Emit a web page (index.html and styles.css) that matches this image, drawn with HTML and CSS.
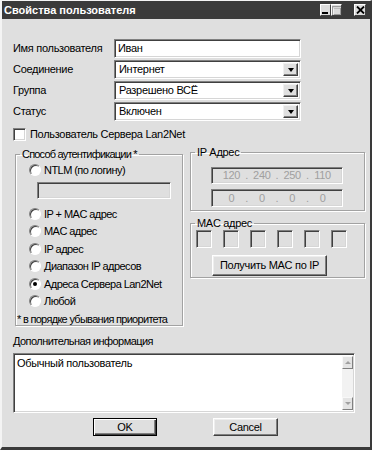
FILE: index.html
```html
<!DOCTYPE html>
<html lang="ru">
<head>
<meta charset="utf-8">
<title>Свойства пользователя</title>
<link rel="stylesheet" href="styles.css">
</head>
<body>
<div class="window">
  <div class="titlebar">
    <span class="title">Свойства пользователя</span>
    <div class="tb-buttons">
      <span class="tb-btn"><svg width="9" height="9" viewBox="0 0 9 9"><rect x="1" y="6" width="6" height="2" fill="#000"/></svg></span>
      <span class="tb-btn"><svg width="9" height="9" viewBox="0 0 9 9"><rect x="0.5" y="0.5" width="8" height="8" fill="none" stroke="#9a9a9a"/><rect x="0.5" y="0.5" width="8" height="2" fill="#9a9a9a"/><rect x="1.5" y="1.5" width="8" height="8" fill="none" stroke="#fff" opacity="0.6"/></svg></span>
      <span class="tb-btn close"><svg width="9" height="8" viewBox="0 0 9 8"><path d="M1 0.5 L8 7.5 M8 0.5 L1 7.5" stroke="#000" stroke-width="1.8"/></svg></span>
    </div>
  </div>
  <div class="content">
    <div class="form">
      <span class="lbl">Имя пользователя</span>
      <div class="field sunken">Иван</div>
      <span class="lbl">Соединение</span>
      <div class="select sunken"><span class="sel-text">Интернет</span><span class="drop"><i class="arrow"></i></span></div>
      <span class="lbl">Группа</span>
      <div class="select sunken"><span class="sel-text">Разрешено ВСЁ</span><span class="drop"><i class="arrow"></i></span></div>
      <span class="lbl">Статус</span>
      <div class="select sunken"><span class="sel-text">Включен</span><span class="drop"><i class="arrow"></i></span></div>
    </div>
    <div class="check-row"><span class="checkbox sunken"></span><span>Пользователь Сервера Lan2Net</span></div>
    <div class="columns">
      <fieldset class="group auth">
        <legend>Способ аутентификации *</legend>
        <div class="radio-row"><span class="radio"></span>NTLM (по логину)</div>
        <div class="login sunken disabled"></div>
        <div class="radio-row first"><span class="radio"></span>IP + MAC адрес</div>
        <div class="radio-row"><span class="radio"></span>MAC адрес</div>
        <div class="radio-row"><span class="radio"></span>IP адрес</div>
        <div class="radio-row"><span class="radio"></span>Диапазон IP адресов</div>
        <div class="radio-row"><span class="radio checked"></span>Адреса Сервера Lan2Net</div>
        <div class="radio-row"><span class="radio"></span>Любой</div>
        <div class="note">* в порядке убывания приоритета</div>
      </fieldset>
      <div class="right-col">
        <fieldset class="group ip">
          <legend>IP Адрес</legend>
          <div class="ipfield sunken disabled"><span>120</span><b>.</b><span>240</span><b>.</b><span>250</span><b>.</b><span>110</span></div>
          <div class="ipfield sunken disabled second"><span>0</span><b>.</b><span>0</span><b>.</b><span>0</span><b>.</b><span>0</span></div>
        </fieldset>
        <fieldset class="group mac">
          <legend>MAC адрес</legend>
          <div class="mac-boxes">
            <span class="macbox sunken disabled"></span>
            <span class="macbox sunken disabled"></span>
            <span class="macbox sunken disabled"></span>
            <span class="macbox sunken disabled"></span>
            <span class="macbox sunken disabled"></span>
            <span class="macbox sunken disabled"></span>
          </div>
          <button class="btn getmac">Получить MAC по IP</button>
        </fieldset>
      </div>
    </div>
    <div class="info-label">Дополнительная информация</div>
    <div class="memo sunken">
      <div class="memo-text">Обычный пользователь</div>
      <div class="scrollbar">
        <span class="sb-btn"><i class="up"></i></span>
        <span class="sb-track"></span>
        <span class="sb-btn"><i class="down"></i></span>
      </div>
    </div>
    <div class="buttons">
      <button class="btn default">OK</button>
      <button class="btn cancel">Cancel</button>
    </div>
  </div>
</div>
</body>
</html>
```

FILE: styles.css
```css
* { box-sizing: border-box; }
html, body { margin: 0; padding: 0; background: #dfdfdf; }
body {
  font-family: "Liberation Sans", Arial, sans-serif;
  font-size: 11px;
  letter-spacing: -0.3px;
  color: #000;
}
.window {
  width: 372px;
  height: 450px;
  background: #dfdfdf;
  border-left: 2px solid #f4f4f4;
  border-top: 1px solid #f4f4f4;
  border-right: 2px solid #3a3a3a;
  border-bottom: 3px solid #3a3a3a;
  display: flex;
  flex-direction: column;
}
.titlebar {
  height: 18px;
  background: #3b3b3b;
  display: flex;
  align-items: center;
  justify-content: space-between;
  padding: 0 4px 0 2px;
}
.title {
  color: #fff;
  font-weight: bold;
  font-size: 11px;
  font-family: "Liberation Sans", Arial, sans-serif;
  letter-spacing: 0;
}
.tb-buttons { display: flex; gap: 0; }
.tb-btn {
  width: 11px;
  height: 12px;
  background: #dcdcdc;
  border: 1px solid;
  border-color: #fff #404040 #404040 #fff;
  display: flex;
  align-items: center;
  justify-content: center;
  overflow: hidden;
}
.tb-btn svg { display: block; }
.tb-btn.close { margin-left: 12px; width: 12px; }
.content {
  padding: 20px 0 0 11px;
  display: flex;
  flex-direction: column;
}
.sunken {
  border: 1px solid;
  border-color: #808080 #fff #fff #808080;
  box-shadow: inset 1px 1px #404040, inset -1px -1px #d6d6d6;
  background: #fff;
}
.disabled { background: #dfdfdf; color: #a0a0a0; }
.form {
  display: grid;
  grid-template-columns: 101px 187px;
  grid-auto-rows: 19px;
  row-gap: 2px;
  align-items: center;
}
.lbl { line-height: 13px; }
.field {
  height: 19px;
  padding: 2px 3px;
  line-height: 13px;
}
.select {
  height: 19px;
  display: flex;
  align-items: stretch;
  padding: 2px 2px 2px 2px;
}
.sel-text { flex: 1; padding-left: 2px; line-height: 13px; }
.drop {
  width: 15px;
  background: #dfdfdf;
  border: 1px solid;
  border-color: #f0f0f0 #404040 #404040 #f0f0f0;
  box-shadow: inset -1px -1px #808080;
  display: flex;
  align-items: center;
  justify-content: center;
}
.arrow {
  width: 0; height: 0;
  border-left: 3.5px solid transparent;
  border-right: 3.5px solid transparent;
  border-top: 4px solid #000;
}
.check-row {
  margin-top: 7px;
  height: 13px;
  display: flex;
  align-items: center;
  gap: 4px;
  line-height: 13px;
}
.checkbox { width: 13px; height: 13px; display: inline-block; }
.columns {
  margin-top: 5px;
  display: flex;
  align-items: flex-start;
  gap: 7px;
}
.group {
  margin: 0;
  padding: 0;
  border: 1px solid #a2a2a2;
  box-shadow: inset 1px 1px #fff, 1px 1px #fff;
  min-width: 0;
}
.group legend {
  margin-left: 4px;
  padding: 0 2px;
  line-height: 13px;
}
.auth legend { letter-spacing: -0.8px; }
.auth {
  margin-left: 2px;
  width: 168px;
  height: 178px;
  margin-top: 2px;
  letter-spacing: -0.55px;
}
.radio-row {
  height: 17.5px;
  display: flex;
  align-items: center;
  padding-left: 13px;
  gap: 3px;
  white-space: nowrap;
}
.radio-row:first-of-type { height: 17px; }
.radio {
  width: 12px;
  height: 12px;
  border-radius: 50%;
  border: 1px solid;
  border-color: #808080 #fff #fff #808080;
  background: #fff;
  box-shadow: inset 1px 1px #404040;
  position: relative;
  flex: none;
}
.radio.checked::after {
  content: "";
  position: absolute;
  left: 3px; top: 3px;
  width: 4px; height: 4px;
  border-radius: 50%;
  background: #000;
}
.login {
  margin: 4px 0 0 21px;
  width: 134px;
  height: 17px;
}
.radio-row.first { margin-top: 6px; }
.note {
  margin-top: 3px;
  line-height: 12px;
  padding-left: 1px;
  white-space: nowrap;
  letter-spacing: -0.7px;
}
.right-col {
  display: flex;
  flex-direction: column;
  width: 175px;
}
.ip { height: 65px; }
.ipfield {
  margin: 8px 0 0 20px;
  width: 132px;
  height: 17px;
  display: flex;
  align-items: center;
  justify-content: space-around;
  padding: 0 8px;
  line-height: 13px;
}
.ipfield b { font-weight: normal; }
.ipfield span { width: 18px; text-align: center; }
.ipfield.second { margin-top: 5px; height: 18px; }
.mac { margin-top: 6px; height: 61px; }
.mac-boxes {
  display: flex;
  gap: 11px;
  padding-left: 5px;
  margin-top: 0;
}
.macbox { width: 16px; height: 18px; display: block; }
.btn {
  font-family: "Liberation Sans", Arial, sans-serif;
  font-size: 11px;
  letter-spacing: -0.3px;
  color: #000;
  background: #dfdfdf;
  border: 1px solid;
  border-color: #fff #404040 #404040 #fff;
  box-shadow: inset -1px -1px #808080, inset 1px 1px #eeeeee;
  padding: 0;
  line-height: 13px;
}
.getmac {
  margin: 7px 0 0 21px;
  width: 115px;
  height: 21px;
}
.info-label {
  margin-top: 9px;
  line-height: 13px;
  letter-spacing: -0.55px;
}
.memo {
  margin-top: 5px;
  width: 342px;
  height: 60px;
  display: flex;
  padding: 2px 1px 2px 2px;
}
.memo-text { flex: 1; padding: 1px 1px; line-height: 13px; }
.scrollbar {
  width: 11px;
  display: flex;
  flex-direction: column;
  background: #f2f2f2;
}
.sb-btn {
  height: 13px;
  background: #e4e4e4;
  border: 1px solid;
  border-color: #f8f8f8 #808080 #808080 #f8f8f8;
  display: flex;
  align-items: center;
  justify-content: center;
}
.sb-track { flex: 1; }
.up, .down { width: 0; height: 0; border-left: 3px solid transparent; border-right: 3px solid transparent; }
.up { border-bottom: 3px solid #a0a0a0; }
.down { border-top: 3px solid #a0a0a0; }
.buttons {
  margin-top: 5px;
  display: flex;
  gap: 56px;
  padding-left: 80px;
}
.btn.default {
  width: 64px;
  height: 18px;
  border: 1px solid #000;
  box-shadow: inset 1px 1px #fff, inset -1px -1px #404040, inset -2px -2px #808080;
}
.btn.cancel { width: 65px; height: 18px; }
```
